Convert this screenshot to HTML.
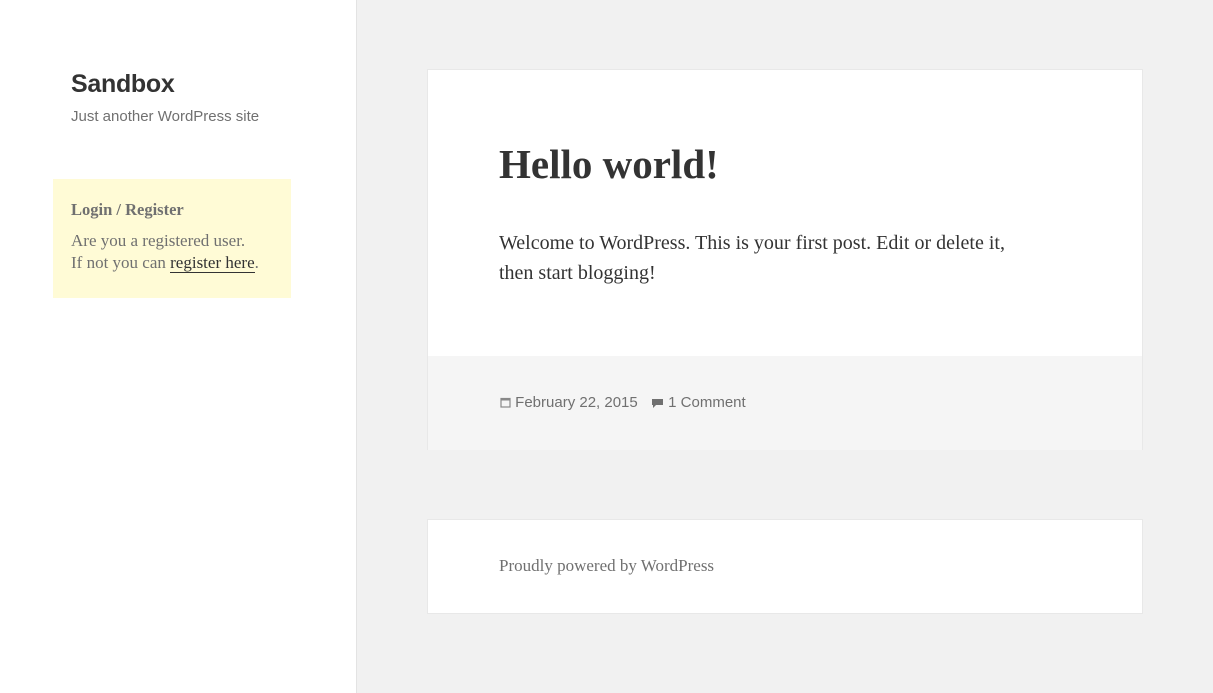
<!DOCTYPE html>
<html><head><meta charset="utf-8"><style>
*{margin:0;padding:0;box-sizing:border-box}
body{width:1213px;height:693px;background:#f1f1f1;position:relative;overflow:hidden;font-family:"Liberation Serif",serif;color:#333}
.side{position:absolute;left:0;top:0;width:357px;height:693px;background:#fff;border-right:1px solid #e3e3e3}
.t{position:absolute;left:71px;top:70px;font:bold 25px "Liberation Sans",sans-serif;color:#333;letter-spacing:-0.3px}
.d{position:absolute;left:71px;top:108px;font:15px "Liberation Sans",sans-serif;color:#707070}
.w{position:absolute;left:53px;top:179px;width:238px;height:119px;background:#fffbd6;padding:21px 18px;color:#707070}
.w h2{font-size:16.5px;font-weight:bold;line-height:20px;margin-bottom:10px}
.w p{font-size:17px;line-height:22px}
.w a{color:#333;text-decoration:none;border-bottom:1px solid #333}
.card{position:absolute;left:427px;top:69px;width:716px;height:381px;background:#fff;border:1px solid #e8e8e8}
.card h1{position:absolute;left:71px;top:70px;font-size:41px;font-weight:bold;color:#333}
.card .c{position:absolute;left:71px;top:158px;width:540px;font-size:20px;line-height:30px;color:#333}
.foot{position:absolute;left:0;top:286px;width:714px;height:94px;background:#f5f5f5;font:15px "Liberation Sans",sans-serif;color:#707070}
.foot span{position:absolute;top:38px}
.f2{position:absolute;left:427px;top:519px;width:716px;height:95px;background:#fff;border:1px solid #e8e8e8}
.f2 p{position:absolute;left:71px;top:36px;font-size:17px;color:#707070}
</style></head><body>
<div class="side">
<div class="t">Sandbox</div>
<div class="d">Just another WordPress site</div>
<div class="w"><h2>Login / Register</h2><p>Are you a registered user.<br>If not you can <a>register here</a>.</p></div>
</div>
<div class="card">
<h1>Hello world!</h1>
<div class="c">Welcome to WordPress. This is your first post. Edit or delete it, then start blogging!</div>
<div class="foot">
<span style="left:72px"><svg width="11" height="11" viewBox="0 0 11 11" style="vertical-align:-1px"><rect x="1" y="1.5" width="9" height="8.5" fill="none" stroke="#888" stroke-width="1.2"/><rect x="1" y="1.5" width="9" height="2" fill="#888"/></svg> February 22, 2015</span>
<span style="left:223px"><svg width="13" height="11" viewBox="0 0 13 11" style="vertical-align:-1px"><path d="M1 2h11v6H5l-3 3V8H1z" fill="#707070"/></svg> 1 Comment</span>
</div>
</div>
<div class="f2"><p>Proudly powered by WordPress</p></div>
</body></html>
